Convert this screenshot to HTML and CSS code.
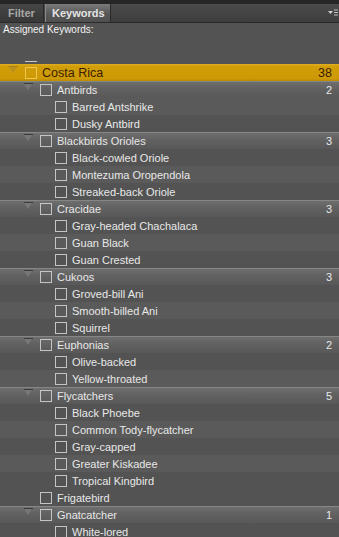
FILE: index.html
```html
<!DOCTYPE html>
<html lang="en">

<head>
    <meta charset="UTF-8">
    <meta name="viewport" content="width=device-width, initial-scale=1.0">
    <title>Keywords</title>
    <link rel="stylesheet" href="styles.css">
</head>

<body>
    <div class="panel">
        <div class="tabbar">
            <div class="tab">Filter</div>
            <div class="tab active">Keywords</div>
            <div class="menu">
                <svg width="10" height="8" viewBox="0 0 10 8">
                    <path d="M0 2 L5 2 L2.5 5 Z" fill="#d0d0d0" />
                    <path d="M6 1 H10 M6 3.5 H10 M6 6 H10" stroke="#c0c0c0" stroke-width="1" />
                </svg>
            </div>
        </div>

        <div class="assigned">Assigned Keywords:</div>
        <div class="gap"><span class="dash"></span></div>

        <div class="tree">
            <div class="row root"><span class="toggle"></span><span class="box"></span><span class="label">Costa Rica</span><span class="count">38</span></div>

            <div class="row group"><span class="toggle"></span><span class="box"></span><span class="label">Antbirds</span><span class="count">2</span></div>
            <div class="row item alt"><span class="toggle"></span><span class="box"></span><span class="label">Barred Antshrike</span></div>
            <div class="row item"><span class="toggle"></span><span class="box"></span><span class="label">Dusky Antbird</span></div>

            <div class="row group"><span class="toggle"></span><span class="box"></span><span class="label">Blackbirds Orioles</span><span class="count">3</span></div>
            <div class="row item"><span class="toggle"></span><span class="box"></span><span class="label">Black-cowled Oriole</span></div>
            <div class="row item alt"><span class="toggle"></span><span class="box"></span><span class="label">Montezuma Oropendola</span></div>
            <div class="row item"><span class="toggle"></span><span class="box"></span><span class="label">Streaked-back Oriole</span></div>

            <div class="row group"><span class="toggle"></span><span class="box"></span><span class="label">Cracidae</span><span class="count">3</span></div>
            <div class="row item"><span class="toggle"></span><span class="box"></span><span class="label">Gray-headed Chachalaca</span></div>
            <div class="row item alt"><span class="toggle"></span><span class="box"></span><span class="label">Guan Black</span></div>
            <div class="row item"><span class="toggle"></span><span class="box"></span><span class="label">Guan Crested</span></div>

            <div class="row group"><span class="toggle"></span><span class="box"></span><span class="label">Cukoos</span><span class="count">3</span></div>
            <div class="row item"><span class="toggle"></span><span class="box"></span><span class="label">Groved-bill Ani</span></div>
            <div class="row item alt"><span class="toggle"></span><span class="box"></span><span class="label">Smooth-billed Ani</span></div>
            <div class="row item"><span class="toggle"></span><span class="box"></span><span class="label">Squirrel</span></div>

            <div class="row group"><span class="toggle"></span><span class="box"></span><span class="label">Euphonias</span><span class="count">2</span></div>
            <div class="row item"><span class="toggle"></span><span class="box"></span><span class="label">Olive-backed</span></div>
            <div class="row item alt"><span class="toggle"></span><span class="box"></span><span class="label">Yellow-throated</span></div>

            <div class="row group"><span class="toggle"></span><span class="box"></span><span class="label">Flycatchers</span><span class="count">5</span></div>
            <div class="row item"><span class="toggle"></span><span class="box"></span><span class="label">Black Phoebe</span></div>
            <div class="row item alt"><span class="toggle"></span><span class="box"></span><span class="label">Common Tody-flycatcher</span></div>
            <div class="row item"><span class="toggle"></span><span class="box"></span><span class="label">Gray-capped</span></div>
            <div class="row item alt"><span class="toggle"></span><span class="box"></span><span class="label">Greater Kiskadee</span></div>
            <div class="row item"><span class="toggle"></span><span class="box"></span><span class="label">Tropical Kingbird</span></div>

            <div class="row leaf"><span class="toggle"></span><span class="box"></span><span class="label">Frigatebird</span></div>

            <div class="row group"><span class="toggle"></span><span class="box"></span><span class="label">Gnatcatcher</span><span class="count">1</span></div>
            <div class="row item"><span class="toggle"></span><span class="box"></span><span class="label">White-lored</span></div>
        </div>
    </div>
</body>

</html>
```

FILE: styles.css
```css
* {
    margin: 0;
    padding: 0;
    box-sizing: border-box;
}

body {
    background-color: #535353;
    font-family: "Liberation Sans", Arial, sans-serif;
    overflow: hidden;
}

.panel {
    width: 339px;
    height: 537px;
    overflow: hidden;
}

/* tabs */
.tabbar {
    height: 23px;
    display: flex;
    align-items: flex-end;
    border-top: 4px solid #262626;
    border-bottom: 1px solid #2a2a2a;
    background: linear-gradient(#4b4b4b, #3d3d3d);
}

.tab {
    height: 18px;
    padding: 0 8px;
    font-size: 11px;
    font-weight: bold;
    line-height: 18px;
    color: #a8a8a8;
    background: linear-gradient(#454545, #383838);
    border-right: 1px solid #2a2a2a;
    width: 44px;
}

.tab.active {
    width: 66px;
    margin-left: 1px;
    color: #e4e4e4;
    background: linear-gradient(#7a7a7a, #5a5a5a 50%, #4f4f4f);
    border-left: 1px solid #8a8a8a;
    border-right: 1px solid #2a2a2a;
    padding-left: 6px;
}

.menu {
    margin-left: auto;
    height: 18px;
    display: flex;
    align-items: center;
    padding-right: 1px;
}

.assigned {
    height: 14px;
    padding-left: 3px;
    font-size: 10px;
    line-height: 14px;
    color: #f2f2f2;
}

.gap {
    height: 27px;
    display: flex;
    align-items: flex-end;
    padding-left: 25px;
    padding-bottom: 2px;
}

.dash {
    width: 12px;
    height: 1px;
    background-color: #c8c8c8;
}

/* tree rows */
.row {
    height: 17px;
    display: flex;
    align-items: center;
    font-size: 11px;
    color: #e8e8e8;
}

.toggle {
    width: 18px;
    height: 17px;
    flex-shrink: 0;
    position: relative;
}

.box {
    width: 12px;
    height: 12px;
    border: 1px solid #c4c4c4;
    margin-right: 5px;
    flex-shrink: 0;
}

.label {
    white-space: nowrap;
}

.count {
    margin-left: auto;
    padding-right: 7px;
}

.root {
    padding-left: 7px;
    background: linear-gradient(#e0ad22, #d19e08 15%, #cd9a06 85%, #b98a05);
    color: #3a1c00;
    font-size: 12.5px;
}

.root .box {
    border-color: #f1c552;
}

.root .toggle::before {
    content: "";
    position: absolute;
    left: 1px;
    top: 2px;
    width: 10px;
    height: 1px;
    background-color: #a98118;
}

.root .toggle::after {
    content: "";
    position: absolute;
    left: 2px;
    top: 3px;
    border-left: 4px solid transparent;
    border-right: 4px solid transparent;
    border-top: 6px solid #bb901c;
}

.group {
    padding-left: 22px;
    border-top: 1px solid #868686;
    background: linear-gradient(#6e6e6e, #626262 40%, #585858);
}

.group .toggle::before {
    content: "";
    position: absolute;
    left: 2px;
    top: 1px;
    width: 9px;
    height: 1px;
    background-color: #3a3a3a;
}

.group .toggle::after {
    content: "";
    position: absolute;
    left: 2px;
    top: 2px;
    border-left: 4.5px solid transparent;
    border-right: 4.5px solid transparent;
    border-top: 6px solid #777777;
}

.item {
    padding-left: 37px;
}

.leaf {
    padding-left: 22px;
}

.alt {
    background-color: #5a5a5a;
}
```
